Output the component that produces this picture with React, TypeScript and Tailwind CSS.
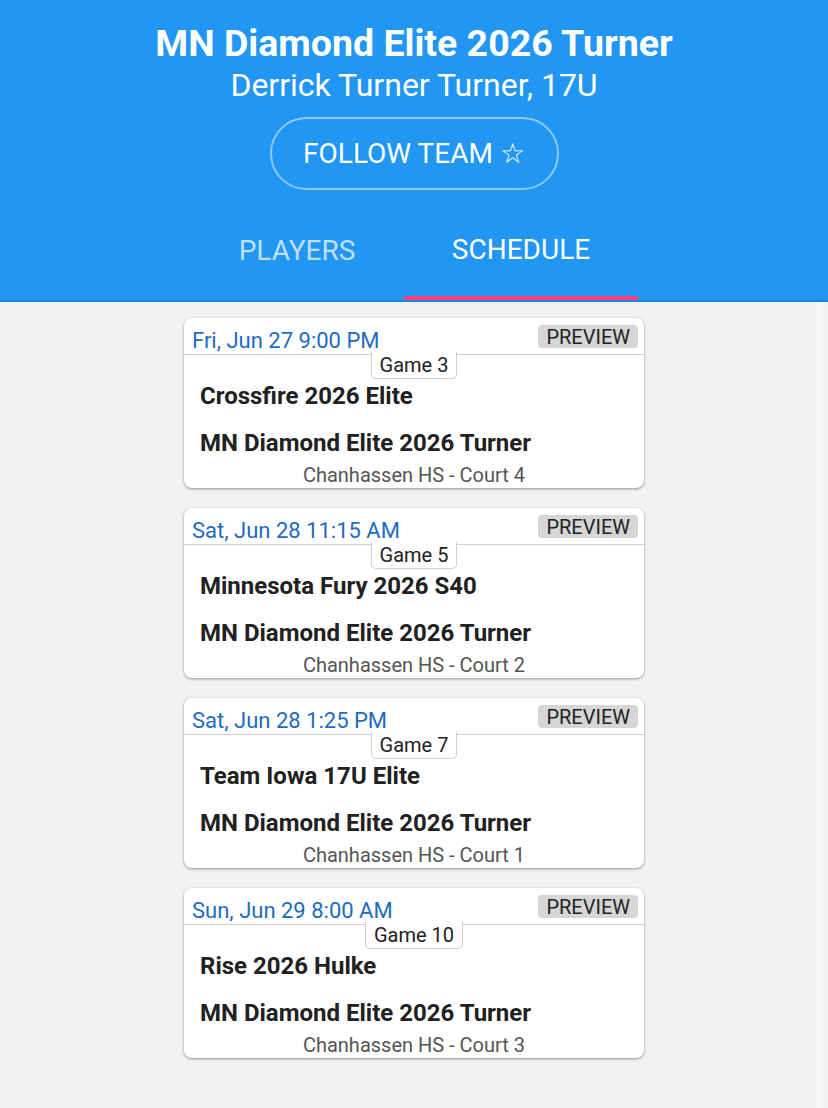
import React from "react";

const games = [
  { date: "Fri, Jun 27 9:00 PM", game: "Game 3", opp: "Crossfire 2026 Elite", court: "Chanhassen HS - Court 4" },
  { date: "Sat, Jun 28 11:15 AM", game: "Game 5", opp: "Minnesota Fury 2026 S40", court: "Chanhassen HS - Court 2" },
  { date: "Sat, Jun 28 1:25 PM", game: "Game 7", opp: "Team Iowa 17U Elite", court: "Chanhassen HS - Court 1" },
  { date: "Sun, Jun 29 8:00 AM", game: "Game 10", opp: "Rise 2026 Hulke", court: "Chanhassen HS - Court 3" },
];

function Card({ g }: { g: (typeof games)[number] }) {
  return (
    <div className="w-[460px] h-[170px] bg-white rounded-[8px] shadow-[0_1px_3px_rgba(0,0,0,0.4)] flex flex-col">
      <div className="h-[37px] flex items-start justify-between pl-[8px] pr-[6px] border-b border-[#cfcfcf]">
        <span className="text-[22px] leading-[28px] mt-[9px] text-[#1f6bbf]">{g.date}</span>
        <span className="mt-[7px] h-[23px] px-[8px] rounded-[4px] bg-[#d6d6d6] text-[20px] leading-[24px] text-[#222]">PREVIEW</span>
      </div>
      <div className="flex justify-center -mt-[3px]">
        <span className="h-[27px] px-[8px] bg-white border-x border-b border-[#cfcfcf] rounded-b-[5px] text-[20px] leading-[26px] text-[#222]">{g.game}</span>
      </div>
      <div className="pl-[16px] mt-[3px] text-[24px] leading-[28px] font-bold text-[#212121]">{g.opp}</div>
      <div className="pl-[16px] mt-[19px] text-[24px] leading-[28px] font-bold text-[#212121]">MN Diamond Elite 2026 Turner</div>
      <div className="mt-[6px] text-center text-[20px] leading-[24px] text-[#555]">{g.court}</div>
    </div>
  );
}

export default function App() {
  return (
    <div className="min-h-screen bg-[#f2f2f2] relative" style={{ fontFamily: "Roboto, 'Noto Sans', sans-serif" }}>
      <div className="bg-[#2196f3] border-b-2 border-[#1b84db] flex flex-col items-center text-white">
        <div className="mt-[21px] text-[37.5px] leading-[44px] font-bold">MN Diamond Elite 2026 Turner</div>
        <div className="mt-[1px] text-[32px] leading-[38px]">Derrick Turner Turner, 17U</div>
        <div className="mt-[13px] w-[289px] h-[73px] rounded-full border-2 border-[#8ec8f7] flex items-center justify-center text-[28px]">
          FOLLOW TEAM ☆
        </div>
        <div className="mt-[11px] flex">
          <div className="w-[214px] h-[99px] flex items-center justify-center text-[28px] text-[#bfe0fb]">PLAYERS</div>
          <div className="w-[234px] h-[99px] flex flex-col">
            <div className="flex-1 flex items-center justify-center text-[28px] text-white pt-[3px]">SCHEDULE</div>
            <div className="h-[4px] bg-[#ff4081]" />
          </div>
        </div>
      </div>
      <div className="absolute right-[6px] top-[302px] bottom-0 w-[6px] bg-[#f9f9f9]" />
      <div className="flex flex-col items-center gap-[20px] pt-[16px] pb-[20px]">
        {games.map((g) => (
          <Card key={g.game} g={g} />
        ))}
      </div>
    </div>
  );
}
